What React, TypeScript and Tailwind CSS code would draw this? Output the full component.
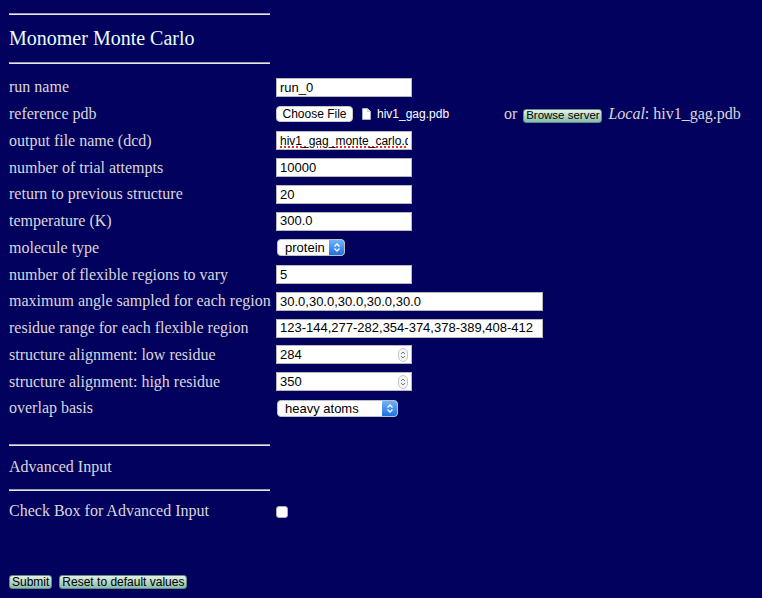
import React from "react";

const serif = { fontFamily: '"Liberation Serif", "Times New Roman", serif' };
const sans = { fontFamily: '"Liberation Sans", Arial, sans-serif' };

function Rule() {
  return <div className="h-[2px] w-[261px] border-t border-[#9a9aa8] bg-[#e6e6ea]" />;
}

function TextBox({ value, wide, spinner, squiggle }: { value: string; wide?: boolean; spinner?: boolean; squiggle?: boolean }) {
  return (
    <div
      className={`flex h-[19px] items-center overflow-hidden whitespace-nowrap border border-[#b8b8b8] bg-white pl-[3px] pr-[3px] text-black ${squiggle ? "text-[12px]" : "text-[13px]"} ${wide ? "w-[267px]" : "w-[136px]"}`}
      style={sans}
    >
      <span
        className={`flex-1 overflow-hidden ${squiggle ? "underline decoration-dotted decoration-[#e03030] decoration-2 underline-offset-2" : ""}`}
      >
        {value}
      </span>
      {spinner && (
        <span className="flex h-[14px] w-[10px] flex-col items-center justify-center rounded-full border border-[#c8c8c8] bg-[#f4f4f4]">
          <svg width="6" height="10" viewBox="0 0 6 10">
            <path d="M1 4 L3 2 L5 4" stroke="#7a7a7a" fill="none" strokeWidth="1" />
            <path d="M1 6 L3 8 L5 6" stroke="#7a7a7a" fill="none" strokeWidth="1" />
          </svg>
        </span>
      )}
    </div>
  );
}

function Select({ value, width }: { value: string; width: string }) {
  return (
    <div
      className={`flex h-[17px] items-center overflow-hidden rounded-[4px] border border-[#c0c0c0] bg-white text-[13px] text-black ${width}`}
      style={sans}
    >
      <span className="flex-1 pl-[7px]">{value}</span>
      <span className="flex h-full w-[15px] items-center justify-center bg-gradient-to-b from-[#6fb4fb] to-[#1f6fe6]">
        <svg width="8" height="11" viewBox="0 0 8 11">
          <path d="M1.5 4.5 L4 2 L6.5 4.5" stroke="#fff" fill="none" strokeWidth="1.3" />
          <path d="M1.5 6.5 L4 9 L6.5 6.5" stroke="#fff" fill="none" strokeWidth="1.3" />
        </svg>
      </span>
    </div>
  );
}

function GreenButton({ children }: { children: React.ReactNode }) {
  return (
    <span
      className="inline-flex h-[14px] items-center rounded-[3px] border border-[#5f8c80] bg-gradient-to-b from-[#e2f2e4] to-[#86bcab] px-[2px] text-[12px] leading-none text-black"
      style={sans}
    >
      {children}
    </span>
  );
}

function Row({ label, children }: { label: string; children?: React.ReactNode }) {
  return (
    <div className="flex h-[26.75px] items-center">
      <div className="w-[267px] shrink-0 whitespace-nowrap">{label}</div>
      {children}
    </div>
  );
}

export default function App() {
  return (
    <div className="min-h-screen bg-[#02025e] pl-[9px] pt-[13px] text-[16px] text-[#dcd6dc]" style={serif}>
      <Rule />
      <h1 className="mt-[12px] h-[23px] text-[20px] leading-[23px] text-[#e4ffff]">Monomer Monte Carlo</h1>
      <div className="mt-[12px]">
        <Rule />
      </div>
      <div className="mt-[10px]">
        <Row label="run name">
          <TextBox value="run_0" />
        </Row>
        <Row label="reference pdb">
          <div className="flex items-center">
            <span
              className="flex h-[16px] w-[77px] items-center justify-center rounded-[4px] border border-[#c8c8c8] bg-white text-[12px] text-black"
              style={sans}
            >
              Choose File
            </span>
            <svg className="ml-[9px]" width="9" height="12" viewBox="0 0 9 12">
              <path d="M0.5 0.5 H5.5 L8.5 3.5 V11.5 H0.5 Z" fill="#fff" stroke="#d0d0d0" strokeWidth="0.6" />
              <path d="M5.5 0.5 V3.5 H8.5" fill="#e8e8e8" stroke="#c0c0c0" strokeWidth="0.6" />
            </svg>
            <span className="ml-[6px] text-[12px] text-white" style={sans}>
              hiv1_gag.pdb
            </span>
            <span className="ml-[55px]">or</span>
            <span className="ml-[6px]">
              <span
                className="inline-flex h-[14px] w-[79px] items-center justify-center rounded-[3px] border border-[#5f8c80] bg-gradient-to-b from-[#e2f2e4] to-[#86bcab] text-[11.5px] leading-none text-black"
                style={sans}
              >
                Browse server
              </span>
            </span>
            <span className="ml-[6px] whitespace-nowrap">
              <i>Local</i>: hiv1_gag.pdb
            </span>
          </div>
        </Row>
        <Row label="output file name (dcd)">
          <TextBox value="hiv1_gag_monte_carlo.dcd" squiggle />
        </Row>
        <Row label="number of trial attempts">
          <TextBox value="10000" />
        </Row>
        <Row label="return to previous structure">
          <TextBox value="20" />
        </Row>
        <Row label="temperature (K)">
          <TextBox value="300.0" />
        </Row>
        <Row label="molecule type">
          <div className="pl-px">
            <Select value="protein" width="w-[68px]" />
          </div>
        </Row>
        <Row label="number of flexible regions to vary">
          <TextBox value="5" />
        </Row>
        <Row label="maximum angle sampled for each region">
          <TextBox value="30.0,30.0,30.0,30.0,30.0" wide />
        </Row>
        <Row label="residue range for each flexible region">
          <TextBox value="123-144,277-282,354-374,378-389,408-412" wide />
        </Row>
        <Row label="structure alignment: low residue">
          <TextBox value="284" spinner />
        </Row>
        <Row label="structure alignment: high residue">
          <TextBox value="350" spinner />
        </Row>
        <Row label="overlap basis">
          <div className="pl-px">
            <Select value="heavy atoms" width="w-[121px]" />
          </div>
        </Row>
      </div>
      <div className="mt-[22px]">
        <Rule />
      </div>
      <div className="mt-[11px] h-[20px] leading-[20px]">Advanced Input</div>
      <div className="mt-[12px]">
        <Rule />
      </div>
      <div className="mt-[9px] flex h-[22px] items-center">
        <div className="w-[267px] shrink-0">Check Box for Advanced Input</div>
        <span className="mt-[2px] h-[12px] w-[12px] rounded-[3px] border border-[#b0b0b0] bg-white" />
      </div>
      <div className="mt-[53px] flex gap-[7px]">
        <GreenButton>Submit</GreenButton>
        <GreenButton>Reset to default values</GreenButton>
      </div>
    </div>
  );
}
